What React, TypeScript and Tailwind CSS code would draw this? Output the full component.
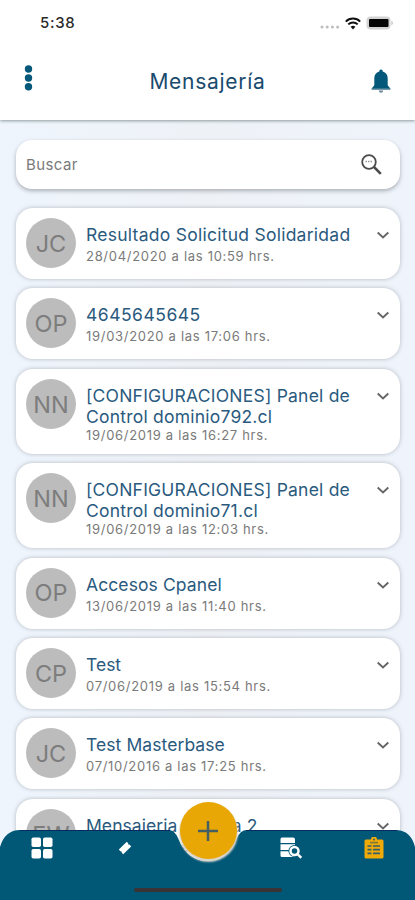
const SANS = "font-['Inter','Liberation_Sans',sans-serif]";

type Message = {
  initials: string;
  title: string[];
  date: string;
  spacing: string;
};

const MESSAGES: Message[] = [
  { initials: "JC", title: ["Resultado Solicitud Solidaridad"], date: "28/04/2020 a las 10:59 hrs.", spacing: "tracking-[0.26px]" },
  { initials: "OP", title: ["4645645645"], date: "19/03/2020 a las 17:06 hrs.", spacing: "tracking-[0.5px]" },
  { initials: "NN", title: ["[CONFIGURACIONES] Panel de", "Control dominio792.cl"], date: "19/06/2019 a las 16:27 hrs.", spacing: "tracking-[0.22px]" },
  { initials: "NN", title: ["[CONFIGURACIONES] Panel de", "Control dominio71.cl"], date: "19/06/2019 a las 12:03 hrs.", spacing: "tracking-[0.22px]" },
  { initials: "OP", title: ["Accesos Cpanel"], date: "13/06/2019 a las 11:40 hrs.", spacing: "tracking-[0.1px]" },
  { initials: "CP", title: ["Test"], date: "07/06/2019 a las 15:54 hrs.", spacing: "tracking-[0px]" },
  { initials: "JC", title: ["Test Masterbase"], date: "07/10/2016 a las 17:25 hrs.", spacing: "tracking-[0.08px]" },
  { initials: "EW", title: ["Mensajeria Prueba 2"], date: "07/10/2016 a las 17:20 hrs.", spacing: "tracking-[0.06px]" },
];

function StatusBar() {
  return (
    <div className="flex h-[46px] items-center justify-between pl-10 pr-[21px] text-[#2b2b2b]">
      <span className="pt-px text-[15px] font-medium tracking-[0.7px]">5:38</span>
      <div className="flex items-center">
        <svg width="20" height="4" viewBox="0 0 20 4" className="mr-px mt-2" fill="#bdbdbd">
          <circle cx="2" cy="2" r="1.5" />
          <circle cx="7.2" cy="2" r="1.5" />
          <circle cx="12.4" cy="2" r="1.5" />
          <circle cx="17.6" cy="2" r="1.5" />
        </svg>
        <svg width="16" height="13" viewBox="0 0 16 13" className="ml-[4px]" fill="none" stroke="#111" strokeWidth="2">
          <path d="M.8 4.6a10.2 10.2 0 0 1 14.4 0M3.3 7.4a6.7 6.7 0 0 1 9.4 0" />
          <path d="M8 12.5 5.6 9.8a3.6 3.6 0 0 1 4.8 0z" fill="#111" stroke="none" />
        </svg>
        <svg width="28" height="14" viewBox="0 0 28 14" className="ml-[5px]">
          <rect x=".5" y=".5" width="24" height="13" rx="4" fill="#d3d3d3" />
          <rect x="3" y="3" width="19.5" height="8" rx="1" fill="#050505" />
          <path d="M25.5 4.5q2.5 2.5 0 5z" fill="#b5b5b5" />
        </svg>
      </div>
    </div>
  );
}

function Header() {
  return (
    <header className="relative z-10 h-[120px] shrink-0 bg-white shadow-[0_1px_3px_rgba(60,80,80,0.55)]">
      <StatusBar />
      <div className="flex h-[70px] items-center justify-between pl-6 pr-[24px]">
        <svg width="9" height="26" viewBox="0 0 9 26" className="-mt-[6px]" fill="#045879">
          <circle cx="4.5" cy="4" r="3.7" />
          <circle cx="4.5" cy="13" r="3.7" />
          <circle cx="4.5" cy="21.8" r="3.7" />
        </svg>
        <h1 className="ml-[11px] pt-px text-[21px] tracking-[0.72px] text-[#194b6e]">Mensajería</h1>
        <svg width="20" height="25" viewBox="0 0 20 25">
          <path d="M10 .5c1.2 0 1.7.8 1.7 1.9 3.3.9 5 3.5 5 6.9v7l2.6 3.2v1H.7v-1l2.6-3.2v-7c0-3.4 1.7-6 5-6.9C8.3 1.3 8.8.5 10 .5z" fill="#045879" />
          <path d="M.7 19.5h18.6v1.3H.7z" fill="#6f94a8" />
          <path d="M7.8 21.5h4.4a2.2 2.2 0 0 1-4.4 0z" fill="#6d8999" />
        </svg>
      </div>
    </header>
  );
}

function SearchBox() {
  return (
    <div className="flex h-[49px] shrink-0 items-center justify-between rounded-[16px] bg-white pl-[10px] pr-[18px] shadow-[0_2px_4px_rgba(70,75,80,0.4)]">
      <span className="pt-px text-[15px] tracking-[0.4px] text-[#7a7a7a]">Buscar</span>
      <svg width="21" height="21" viewBox="0 0 21 21" fill="none" stroke="#4b4b4b">
        <circle cx="8" cy="8" r="6.8" strokeWidth="1.8" />
        <path d="m13 13 6.8 6.8" strokeWidth="2.5" />
        <path d="M4.5 7.5h7" stroke="#999" strokeWidth="1.3" strokeDasharray="1.5 1" />
      </svg>
    </div>
  );
}

function MessageCard({ message }: { message: Message }) {
  const tall = message.title.length > 1;
  return (
    <article
      className={`flex shrink-0 rounded-[17px] bg-white px-[10px] pt-[10px] shadow-[0_0_4px_rgba(70,75,80,0.35)] ${tall ? "h-[85px]" : "h-[71px]"}`}
    >
      <div className="flex size-[50px] shrink-0 items-center justify-center rounded-full bg-[#bcbcbc] pt-px text-[23.5px] text-[#7d7d7d]">
        {message.initials}
      </div>
      <div className="ml-[10px] min-w-0 flex-1 whitespace-nowrap pt-[6px]">
        <h2 className={`text-[17.5px] leading-[21px] text-[#2a5a7e] ${message.spacing}`}>
          {message.title.map((line) => (
            <span key={line} className="block">{line}</span>
          ))}
        </h2>
        <p className={`text-[13px] leading-[16px] tracking-[0.7px] text-[#7a7a7a] ${tall ? "" : "mt-[3px]"}`}>
          {message.date}
        </p>
      </div>
      <svg width="14" height="9" viewBox="0 0 14 9" className="mt-[13px]" fill="none" stroke="#666" strokeWidth="1.9">
        <path d="m1.700 1.500 5.300 5 5.300-5" />
      </svg>
    </article>
  );
}

function TabBar() {
  return (
    <nav className="absolute inset-x-0 bottom-0 h-[70px]">
      <svg width="415" height="70" viewBox="0 0 415 70" className="absolute inset-0">
        <path d="M0 70V17Q5 0 20 0H168Q175 0 178.500 9C184 24 195 31 207.500 31S231 24 236.500 9Q240 0 247 0H397Q411 1 415 17V70z" fill="#005776" />
        <path d="M20 .5H170M246 .5H397" stroke="#062b60" />
      </svg>
      <div className="relative flex h-9 items-center">
        <div className="flex flex-1 justify-center">
          <svg width="22" height="22" viewBox="0 0 22 22" fill="#fff">
            <rect x=".5" y=".5" width="9.5" height="9.5" rx="1.8" />
            <rect x="12" y=".5" width="9.5" height="9.5" rx="1.8" />
            <rect x=".5" y="12" width="9.5" height="9.5" rx="1.8" />
            <rect x="12" y="12" width="9.5" height="9.5" rx="1.8" />
          </svg>
        </div>
        <div className="flex flex-1 justify-center">
          <svg width="14" height="14" viewBox="0 0 14 14" fill="#fff">
            <path d="M8.800.8 10.200 2.300a1 1 0 0 0 1.300 1.300L13.200 5.400 5.200 13.200 3.700 11.700a1.100 1.100 0 0 0-1.400-1.400L.8 8.600z" />
          </svg>
        </div>
        <div className="flex-1" />
        <div className="flex flex-1 justify-center">
          <svg width="22" height="22" viewBox="0 0 22 22">
            <path d="M2 .5h11a2 2 0 0 1 2 2V6H.5V2A1.500 1.500 0 0 1 2 .5zM.5 7.200H15V13H.5zM.5 14.200H15V20H2a1.500 1.500 0 0 1-1.500-1.500z" fill="#fff" />
            <circle cx="14.5" cy="14" r="4.3" fill="#005776" stroke="#005776" strokeWidth="3.6" />
            <circle cx="14.5" cy="14" r="4" fill="none" stroke="#fff" strokeWidth="2.5" />
            <path d="m17.300 16.800 4 4" stroke="#fff" strokeWidth="2.5" />
          </svg>
        </div>
        <div className="flex flex-1 justify-center">
          <svg width="20" height="22" viewBox="0 0 20 22">
            <path d="M2 2.500h5a3 3 0 0 1 6 0h5A1.500 1.500 0 0 1 19.500 4V20a1.500 1.500 0 0 1-1.500 1.500H2A1.500 1.500 0 0 1 .5 20V4A1.500 1.500 0 0 1 2 2.500z" fill="#efaa08" />
            <path d="M6 5.600h8" stroke="#7a7a38" strokeWidth="1.6" />
            <path d="M3.500 9h4M9 9h7M3.500 12.700h4M9 12.700h7M3.500 16.400h4M9 16.400h7" stroke="#37606a" strokeWidth="1.7" />
            <circle cx="10" cy="2.6" r="1" fill="#37606a" />
          </svg>
        </div>
      </div>
      <button className="absolute -top-[28px] left-[179.5px] flex size-[57px] items-center justify-center rounded-full bg-[#e9a705] shadow-[0_2px_2px_1px_#d9d5cb]">
        <svg width="22" height="22" viewBox="0 0 22 22" stroke="#455f62" strokeWidth="2.5">
          <path d="M11 1v20M1 11h20" />
        </svg>
      </button>
      <div className="absolute bottom-[8px] left-[134px] h-[4px] w-[148px] rounded-full bg-[#3b3335]" />
    </nav>
  );
}

export default function App() {
  return (
    <div className={`relative flex h-[900px] w-[415px] flex-col overflow-hidden bg-[#eff4fc] ${SANS}`}>
      <Header />
      <main className="flex min-h-0 flex-1 flex-col bg-linear-to-r from-[#eff5fd] via-[#eef2f7] to-[#eff4fc] pl-4 pr-[15px] pt-[20px]">
        <SearchBox />
        <div className="mt-[19px] flex flex-col gap-[9.4px]">
          {MESSAGES.map((message) => (
            <MessageCard key={message.title[0] + message.date} message={message} />
          ))}
        </div>
      </main>
      <TabBar />
    </div>
  );
}
